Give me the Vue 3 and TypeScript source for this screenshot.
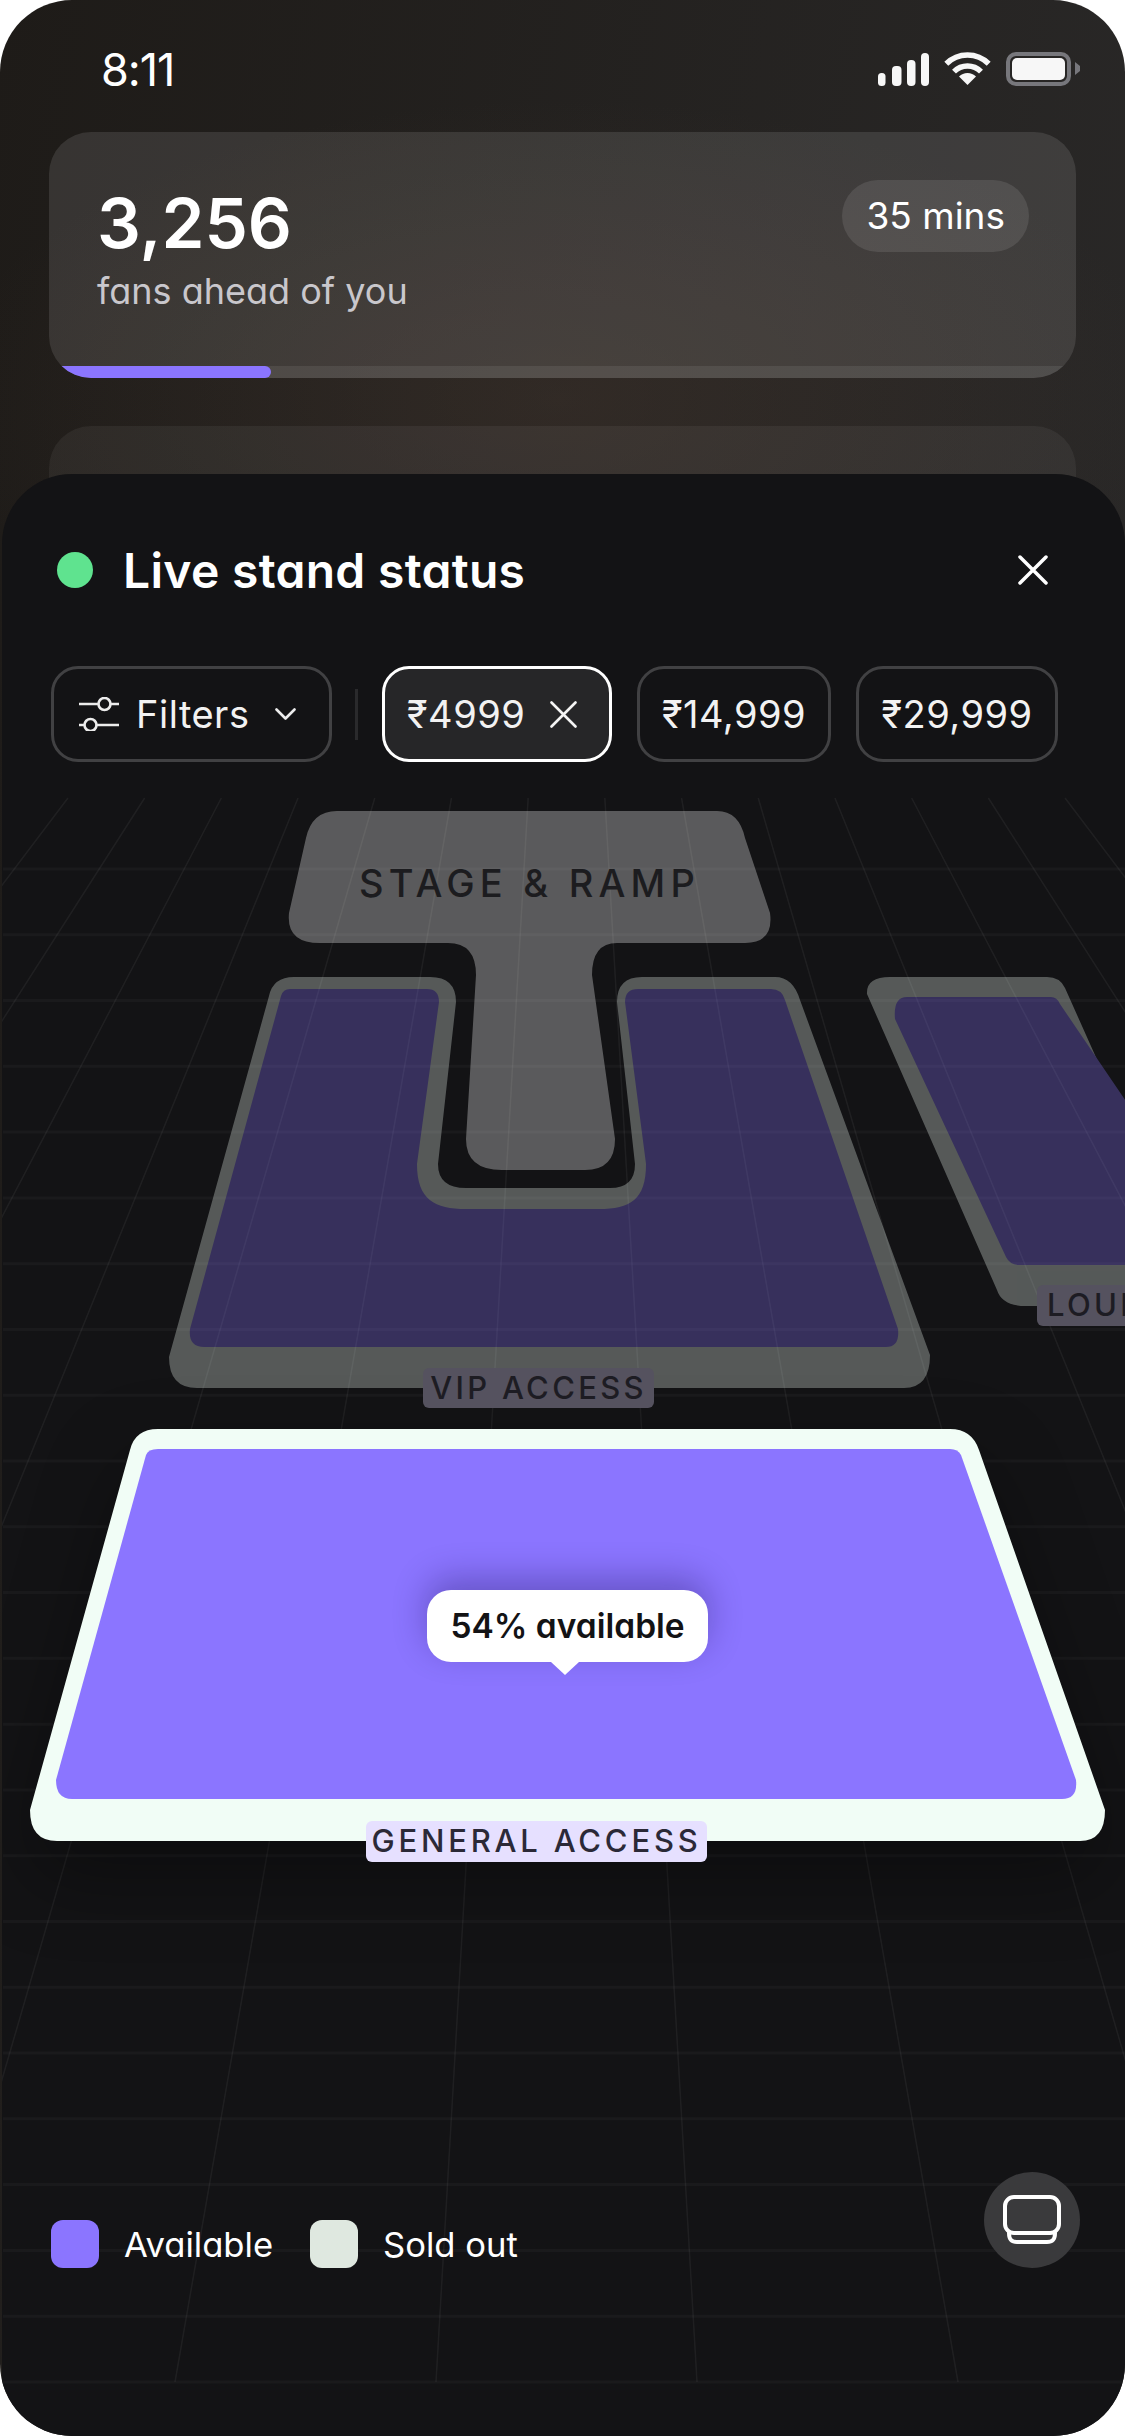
<template>
  <div class="phone">
    <div class="status">
      <span class="time">8:11</span>
      <div class="status-icons">
        <svg class="signal" width="51" height="33" viewBox="0 0 51 33" fill="#f7f7f7">
          <rect x="0" y="20" width="7.5" height="13" rx="3.5" />
          <rect x="14" y="13" width="9.5" height="20" rx="4" />
          <rect x="29" y="7" width="8.5" height="26" rx="4" />
          <rect x="43" y="0" width="8" height="33" rx="4" />
        </svg>
        <svg class="wifi" width="47" height="33" viewBox="0 0 47 33" fill="none" stroke="#f7f7f7" stroke-width="5.5">
          <path d="M2.3 11.8A30 30 0 0 1 44.7 11.8" />
          <path d="M10 19.6A19 19 0 0 1 37 19.6" />
          <path d="M23.5 33L15 24.5A12 12 0 0 1 32 24.5Z" fill="#f7f7f7" stroke="none" />
        </svg>
        <div class="battery"><i></i></div>
        <svg class="battery-cap" width="5" height="13" viewBox="0 0 5 13"><path d="M0 0L5 4V9L0 13Z" fill="#77777c" /></svg>
      </div>
    </div>

    <section class="queue">
      <div class="queue-body">
        <div>
          <div class="queue-count">3,256</div>
          <div class="queue-label">fans ahead of you</div>
        </div>
        <span class="queue-time">35 mins</span>
      </div>
      <div class="track"><div class="track-fill" :style="{ width: progress + 'px' }"></div></div>
    </section>
    <div class="stub"></div>

    <main class="panel">
      <svg class="grid" width="1125" height="1962" viewBox="0 474 1125 1962">
        <line v-for="y in rows" :key="'h' + y" x1="3" x2="1125" :y1="y" :y2="y" stroke="rgba(255,255,255,.032)" stroke-width="3" />
        <line
          v-for="c in columns"
          :key="'v' + c.top"
          :x1="c.top"
          y1="798"
          :x2="c.bottom"
          y2="2382"
          stroke="rgba(255,255,255,.055)"
          stroke-width="1.5"
        />
      </svg>

      <header class="panel-head">
        <span class="live-dot"></span>
        <h1>Live stand status</h1>
        <svg class="close" width="30" height="30" viewBox="0 0 30 30" stroke="#fff" stroke-width="3.5" stroke-linecap="round">
          <path d="M2 2L28 28M28 2L2 28" />
        </svg>
      </header>

      <div class="filters">
        <button class="chip chip-filter">
          <svg width="40" height="34" viewBox="0 0 40 34" fill="none" stroke="#ececec" stroke-width="2.6" stroke-linecap="round">
            <path d="M0 7H19M32 7H40M0 28H5M18 28H40" />
            <circle cx="25.5" cy="7" r="6" />
            <circle cx="11.5" cy="28" r="6" />
          </svg>
          <span>Filters</span>
          <svg class="chev" width="21" height="12" viewBox="0 0 21 12" fill="none" stroke="#ececec" stroke-width="2.6" stroke-linecap="round" stroke-linejoin="round">
            <path d="M1.5 1.5L10.5 10.5L19.5 1.5" />
          </svg>
        </button>
        <span class="divider"></span>
        <button class="chip chip-on">
          <span>₹4999</span>
          <svg width="27" height="27" viewBox="0 0 27 27" stroke="#f4f4f4" stroke-width="2.6" stroke-linecap="round"><path d="M1.5 1.5L25.5 25.5M25.5 1.5L1.5 25.5" /></svg>
        </button>
        <button v-for="p in prices" :key="p" class="chip chip-price">{{ p }}</button>
      </div>

      <div class="map">
        <svg class="map-art" width="1125" height="1382" viewBox="0 790 1125 1382">
          <g opacity=".3">
            <path
              fill="#fff"
              d="M337 811H717Q739 811 745 838L770 913Q774 943 745 943H617Q592 943 592 975L615 1139Q615 1170 585 1170H502Q466 1170 466 1139L476 975Q476 943 448 943H320Q286 943 289 913L306 838Q312 811 337 811Z"
            />
            <path
              fill="#f0fbf4"
              d="M294 977H430Q456 977 456 1002L438 1164Q438 1188 466 1188H610Q635 1188 635 1164L617 1002Q617 977 642 977H775Q793 977 800 1000L930 1355Q930 1388 904 1388H197Q169 1388 169 1357L269 996Q273 977 294 977Z"
            />
            <path
              fill="#8b75ff"
              d="M290 989H427Q439 989 439 1002L417 1164C417 1200 435 1209 466 1209H599C630 1209 646 1200 646 1164L625 1002Q625 989 638 989H771Q782 989 785 1000L898 1329Q900 1347 886 1347H204Q188 1347 190 1329L281 996Q283 989 290 989Z"
            />
            <path
              fill="#f0fbf4"
              d="M890 977H1047Q1060 977 1065 988L1200 1290V1306H1026Q1002 1306 997 1290L867 994Q866 977 890 977Z"
            />
            <path
              fill="#8b75ff"
              d="M907 997H1051Q1057 997 1060 1004L1200 1210V1265H1019Q1010 1265 1006 1257L895 1019Q893 997 907 997Z"
            />
          </g>
          <g class="general">
            <path
              fill="#f1fdf6"
              d="M158 1429H950Q972 1429 979 1450L1105 1810Q1105 1841 1080 1841H57Q30 1841 30 1810L130 1450Q135 1429 158 1429Z"
            />
            <path
              fill="#8b75ff"
              d="M158 1449H950Q958 1449 961 1455L1076 1780Q1078 1799 1062 1799H72Q56 1799 56 1780L146 1455Q148 1449 158 1449Z"
            />
          </g>
        </svg>

        <span class="stage-name">STAGE &amp; RAMP</span>
        <span class="tag tag-dim tag-vip">VIP ACCESS</span>
        <span class="tag tag-dim tag-lounge">LOUNGE</span>
        <span class="tag tag-general">GENERAL ACCESS</span>
        <div class="tip">54% available</div>
      </div>

      <footer class="legend">
        <span class="swatch swatch-open"></span>
        <span class="legend-text">Available</span>
        <span class="swatch swatch-gone"></span>
        <span class="legend-text">Sold out</span>
        <button class="view-btn">
          <svg width="58" height="50" viewBox="0 0 58 50" fill="none" stroke="#fff" stroke-width="4" stroke-linejoin="round">
            <rect x="2" y="2" width="54" height="36" rx="9" />
            <path d="M6 38C6 45 9 47 14 47H44C49 47 52 45 52 38" stroke-linecap="round" />
          </svg>
        </button>
      </footer>
    </main>
  </div>
</template>

<script setup lang="ts">
const progress = 271 - 49
const prices: string[] = ['₹14,999', '₹29,999']

const rows: number[] = Array.from({ length: 24 }, (_, i) => 869 + i * 65.78)

const columns = Array.from({ length: 16 }, (_, i) => {
  const k = i - 8 + 0.5
  return { top: 566.5 + 76.7 * k, bottom: 566.5 + 261 * k }
})
</script>

<style>
html,
body {
  margin: 0;
  background: #fff;
}
</style>

<style scoped>
.phone {
  width: 1125px;
  height: 2436px;
  border-radius: 72px;
  overflow: hidden;
  display: flex;
  flex-direction: column;
  font-family: Inter, 'Noto Sans', sans-serif;
  font-feature-settings: 'cv11';
  color: #fff;
  background:
    radial-gradient(620px 300px at 560px 400px, rgba(74, 58, 48, 0.36), transparent),
    linear-gradient(100deg, #1e1b18, #2c2b2b);
}
.status {
  height: 132px;
  flex: none;
  display: flex;
  justify-content: space-between;
  box-sizing: border-box;
  padding: 52px 45px 0 101px;
}
.time {
  font-size: 45px;
  line-height: 36px;
  letter-spacing: -1px;
}
.status-icons {
  display: flex;
  align-items: flex-start;
}
.signal {
  margin-top: 1px;
}
.wifi {
  margin: 0 15px;
}
.battery {
  width: 65px;
  height: 34px;
  box-sizing: border-box;
  border: 4px solid #77777c;
  border-radius: 10px;
  padding: 2px;
}
.battery i {
  display: block;
  height: 100%;
  background: #f7f7f7;
  border-radius: 5px;
}
.battery-cap {
  margin: 10px 0 0 4px;
}

.queue {
  margin: 0 49px;
  height: 246px;
  flex: none;
  border-radius: 42px;
  overflow: hidden;
  display: flex;
  flex-direction: column;
  background: rgba(255, 255, 255, 0.11);
}
.queue-body {
  flex: 1;
  display: flex;
  justify-content: space-between;
  align-items: flex-start;
  padding: 48px 47px 0 48px;
}
.queue-count {
  margin-top: 3px;
  font-size: 69px;
  font-weight: 600;
  line-height: 80px;
}
.queue-label {
  margin-top: 6px;
  font-size: 36px;
  line-height: 44px;
  color: #c9c7cc;
}
.queue-time {
  height: 72px;
  line-height: 72px;
  padding: 0 24px;
  border-radius: 36px;
  background: rgba(255, 255, 255, 0.1);
  font-size: 37px;
}
.track {
  height: 12px;
  flex: none;
  background: rgba(255, 255, 255, 0.08);
}
.track-fill {
  height: 100%;
  background: #8b75ff;
  border-radius: 0 6px 6px 0;
}
.stub {
  margin: 48px 49px -52px;
  height: 100px;
  flex: none;
  border-radius: 42px 42px 0 0;
  background: rgba(255, 255, 255, 0.055);
}

.panel {
  position: relative;
  flex: 1;
  margin-left: 2px;
  border-radius: 70px 70px 0 0;
  background: #131315;
  display: flex;
  flex-direction: column;
  overflow: hidden;
}
.grid {
  position: absolute;
  left: -2px;
  top: 0;
}
.panel-head {
  position: relative;
  flex: none;
  margin-top: 71px;
  padding: 0 76px 0 55px;
  height: 50px;
  display: flex;
  align-items: center;
}
.live-dot {
  width: 36px;
  height: 36px;
  border-radius: 50%;
  background: #5fe38f;
}
h1 {
  margin: 1px 0 0 30px;
  font-size: 48px;
  font-weight: 600;
  letter-spacing: 0.3px;
  flex: 1;
}
.close {
  margin: 0 1px 0 0;
}
.filters {
  position: relative;
  display: flex;
  align-items: center;
  margin-top: 71px;
  padding-left: 49px;
}
.chip {
  height: 96px;
  box-sizing: border-box;
  display: flex;
  align-items: center;
  justify-content: center;
  border: 3px solid #414143;
  border-radius: 27px;
  background: #131315;
  color: #f2f2f2;
  font: inherit;
  font-size: 38px;
  font-feature-settings: 'cv11';
  letter-spacing: 0.5px;
  padding: 0;
}
.chip-filter {
  width: 281px;
  justify-content: flex-start;
  padding-left: 25px;
  gap: 17px;
}
.chev {
  margin-left: 9px;
}
.divider {
  width: 3px;
  height: 51px;
  margin: 0 24px 0 23px;
  background: #2a2a2c;
}
.chip-on {
  width: 230px;
  justify-content: flex-start;
  padding-left: 22px;
  gap: 25px;
  border-color: #fff;
  background: #262628;
}
.chip-price {
  width: 194px;
  margin-left: 25px;
}
.chip-price:last-child {
  width: 202px;
}

.map {
  position: relative;
  flex: 1;
  margin-top: 28px;
}
.map-art {
  position: absolute;
  left: -2px;
  top: 0;
  overflow: visible;
}
.general {
  filter: drop-shadow(0 34px 40px rgba(0, 0, 0, 0.35));
}
.stage-name {
  position: absolute;
  left: 357px;
  top: 70px;
  font-size: 38px;
  line-height: 46px;
  font-weight: 500;
  letter-spacing: 5.2px;
  color: #1c1c1f;
  white-space: nowrap;
}
.tag {
  position: absolute;
  box-sizing: border-box;
  border-radius: 6px;
  font-size: 31px;
  font-weight: 500;
  white-space: nowrap;
  text-align: center;
}
.tag-dim {
  background: #55525f;
  color: #1d1c23;
  letter-spacing: 3.3px;
}
.tag-vip {
  left: 421px;
  top: 578px;
  width: 231px;
  height: 40px;
  line-height: 39px;
}
.tag-lounge {
  left: 1035px;
  top: 495px;
  height: 41px;
  line-height: 40px;
  padding: 0 10px;
}
.tag-general {
  left: 364px;
  top: 1031px;
  width: 341px;
  height: 41px;
  line-height: 39px;
  background: #e6e0ff;
  color: #2b2937;
  letter-spacing: 3.8px;
}
.tip {
  position: absolute;
  left: 425px;
  top: 800px;
  width: 281px;
  height: 72px;
  line-height: 72px;
  text-align: center;
  border-radius: 24px;
  background: #fff;
  color: #131315;
  font-size: 33.5px;
  font-weight: 600;
  box-shadow: 0 -12px 34px rgba(20, 10, 70, 0.3);
}
.tip::after {
  content: '';
  position: absolute;
  left: 124px;
  top: 72px;
  border-top: 13px solid #fff;
  border-left: 14px solid transparent;
  border-right: 14px solid transparent;
}

.legend {
  position: relative;
  height: 96px;
  flex: none;
  margin-bottom: 168px;
  padding: 0 45px 0 49px;
  display: flex;
  align-items: flex-end;
}
.swatch {
  width: 48px;
  height: 48px;
  border-radius: 12px;
}
.swatch-open {
  background: #8b75ff;
}
.swatch-gone {
  background: #dfe8e0;
  margin-left: 37px;
}
.legend-text {
  margin-left: 25px;
  font-size: 34.6px;
  line-height: 47px;
}
.view-btn {
  width: 96px;
  height: 96px;
  margin-left: auto;
  border: 0;
  padding: 0;
  border-radius: 50%;
  background: #3a3a3c;
  display: flex;
  align-items: center;
  justify-content: center;
}
</style>
